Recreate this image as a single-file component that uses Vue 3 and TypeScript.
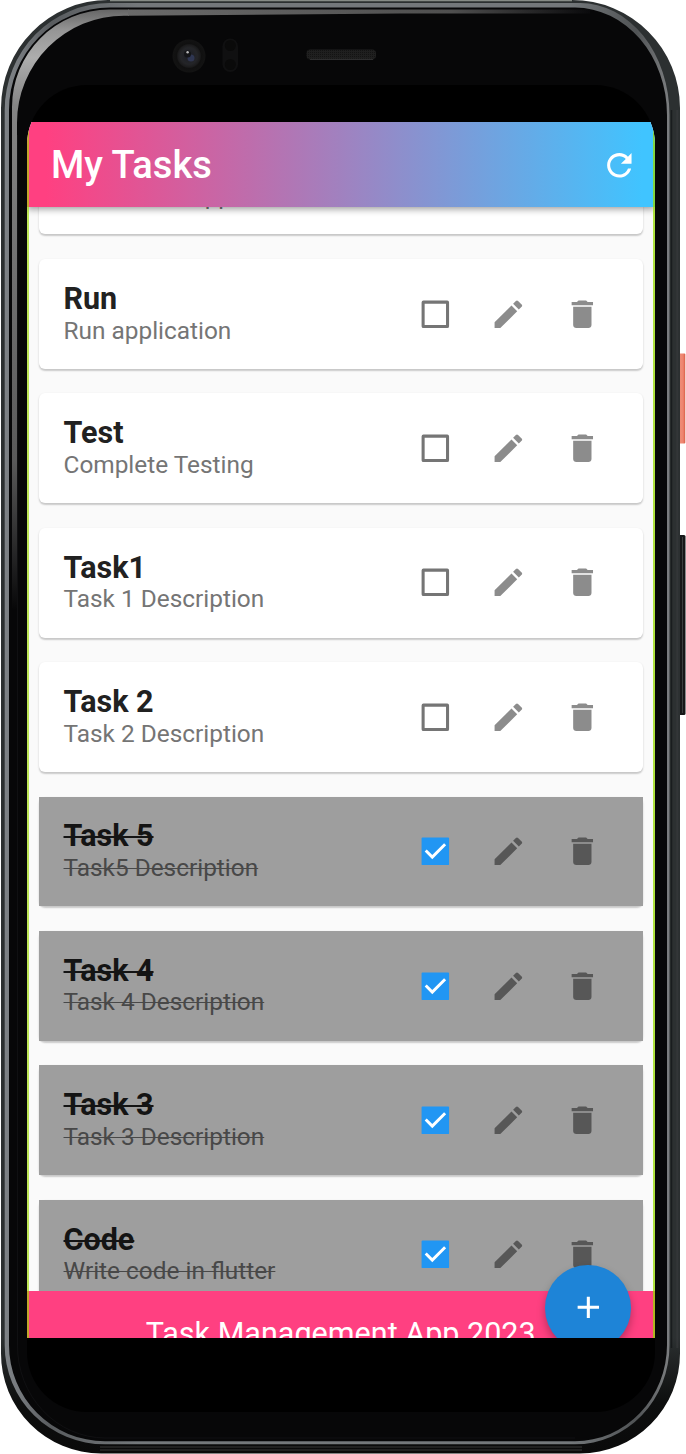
<script setup lang="ts">
interface Task {
  title: string
  description: string
  done: boolean
}

const tasks: Task[] = [
  { title: '', description: 'Create new app', done: false },
  { title: 'Run', description: 'Run application', done: false },
  { title: 'Test', description: 'Complete Testing', done: false },
  { title: 'Task1', description: 'Task 1 Description', done: false },
  { title: 'Task 2', description: 'Task 2 Description', done: false },
  { title: 'Task 5', description: 'Task5 Description', done: true },
  { title: 'Task 4', description: 'Task 4 Description', done: true },
  { title: 'Task 3', description: 'Task 3 Description', done: true },
  { title: 'Code', description: 'Write code in flutter', done: true },
]
</script>

<template>
  <div class="device">
    <svg class="shell" viewBox="0 0 686 1454" aria-hidden="true">
      <defs>
        <linearGradient id="body" x1="0" x2="0" y1="0" y2="1">
          <stop offset="0" stop-color="#2c3031" />
          <stop offset="0.92" stop-color="#2c3031" />
          <stop offset="0.965" stop-color="#0d0e0e" />
          <stop offset="1" stop-color="#0a0a0a" />
        </linearGradient>
        <linearGradient id="rimOuter" x1="0" x2="1" y1="0" y2="0">
          <stop offset="0" stop-color="#7e8286" />
          <stop offset="0.02" stop-color="#777b7f" />
          <stop offset="0.07" stop-color="#595c5f" />
          <stop offset="0.2" stop-color="#74787b" />
          <stop offset="0.85" stop-color="#74787b" />
          <stop offset="0.95" stop-color="#505355" />
          <stop offset="1" stop-color="#7c7e80" />
        </linearGradient>
        <linearGradient id="rimInner" x1="0" x2="0" y1="0" y2="1">
          <stop offset="0" stop-color="#666" />
          <stop offset="0.035" stop-color="#969696" />
          <stop offset="0.08" stop-color="#adadad" />
          <stop offset="0.16" stop-color="#858585" />
          <stop offset="0.4" stop-color="#737373" />
          <stop offset="0.75" stop-color="#5a5a5a" />
          <stop offset="1" stop-color="#070708" />
        </linearGradient>
        <linearGradient id="rimTop" x1="0" x2="1" y1="0" y2="0">
          <stop offset="0" stop-color="#6a6a6a" />
          <stop offset="0.7" stop-color="#4f4f4f" />
          <stop offset="1" stop-color="#0a0a0c" />
        </linearGradient>
        <radialGradient id="lens">
          <stop offset="0" stop-color="#1b1d25" />
          <stop offset="0.5" stop-color="#242528" />
          <stop offset="0.68" stop-color="#1b1b1c" />
          <stop offset="0.75" stop-color="#101010" />
          <stop offset="1" stop-color="#131313" />
        </radialGradient>
        <linearGradient id="power" x1="0" x2="1" y1="0" y2="0">
          <stop offset="0" stop-color="#c85543" />
          <stop offset="0.35" stop-color="#ef8b76" />
          <stop offset="0.7" stop-color="#ee846e" />
          <stop offset="1" stop-color="#d85c46" />
        </linearGradient>
        <pattern id="mesh" width="2" height="2" patternUnits="userSpaceOnUse">
          <rect width="2" height="2" fill="#1f1f1f" />
          <rect width="1" height="1" fill="#131313" />
        </pattern>
      </defs>

      <!-- side buttons -->
      <rect x="678" y="353.500" width="7.300" height="90" rx="1" fill="url(#power)" />
      <rect x="678" y="535" width="7.500" height="180" rx="1.500" fill="#161718" />
      <path d="M682.500 537v176" stroke="#3b3e3e" stroke-width="1" />

      <!-- metal rim -->
      <path d="M1 108A107 108 0 0 1 108 0H572A108 108 0 0 1 680 108V1353A100 100 0 0 1 580 1453.500H101A100 100 0 0 1 1 1353Z" fill="url(#body)" />
      <path d="M110 .6H572" stroke="#858a85" stroke-width="1.200" />
      <path d="M677.300 110V1348" stroke="#393b3d" stroke-width="2" opacity=".6" />
      <path d="M671.500 110V1348" stroke="#121416" stroke-width="1.500" opacity=".7" />
      <path d="M100 1450H582M100 1447H582" stroke="#444" stroke-width=".8" fill="none" />
      <path d="M4.700 110A105.300 107 0 0 1 110 3H580A89.500 112 0 0 1 669.500 115V1345A94.500 99 0 0 1 575 1444.300H105A100.300 99 0 0 1 4.700 1345Z" fill="url(#rimOuter)" />
      <path d="M9 110A101 102.400 0 0 1 110 7.600H575A92 107.400 0 0 1 667 115V1345A92 96.500 0 0 1 575 1441.200H105A96 96.200 0 0 1 9 1345Z" fill="#070708" />
      <path d="M12 610V107A97 97.400 0 0 1 109 9.600H129V15.700H124A107 107 0 0 0 17 122.700V610Z" fill="url(#rimInner)" />
      <path d="M128 9.600H590V13.500H400L128 15.700Z" fill="url(#rimTop)" />

      <!-- glass edge -->
      <path d="M17.500 135V1345A88 92 0 0 0 105 1438H575" fill="none" stroke="#101012" stroke-width="1" />

      <!-- camera, sensor and earpiece -->
      <circle cx="189" cy="56" r="16.500" fill="url(#lens)" />
      <circle cx="191" cy="58" r="3.500" fill="#343d60" opacity=".75" />
      <circle cx="187.500" cy="54" r="3.500" fill="#141518" />
      <circle cx="187.600" cy="52.300" r="1.200" fill="#b9b9b9" />
      <rect x="222.500" y="38.500" width="15.500" height="33.500" rx="7.700" fill="#101011" />
      <circle cx="230.300" cy="45.500" r="5.500" fill="#0a0a0a" />
      <circle cx="230.300" cy="64.500" r="5.500" fill="#0a0a0a" />
      <rect x="306.500" y="49.500" width="69.500" height="10" rx="4" fill="url(#mesh)" />
      <path d="M310 59.300H373" stroke="#363636" />
    </svg>

    <div class="screen">
      <main class="app">
        <header class="bar">
          <h1>My Tasks</h1>
          <svg class="icon" viewBox="0 0 24 24">
            <path d="M17.650 6.350C16.200 4.900 14.210 4 12 4c-4.420 0-7.990 3.580-7.990 8s3.570 8 7.990 8c3.730 0 6.840-2.550 7.730-6h-2.080c-.82 2.330-3.040 4-5.650 4-3.310 0-6-2.690-6-6s2.690-6 6-6c1.660 0 3.140.69 4.220 1.780L13 11h7V4l-2.350 2.350z" />
          </svg>
        </header>

        <section class="viewport">
          <ul class="list">
            <li v-for="task in tasks" :key="task.description" class="card">
              <div class="tile" :class="{ done: task.done }">
                <div class="copy">
                  <h2>{{ task.title }}</h2>
                  <p>{{ task.description }}</p>
                </div>
                <div class="actions">
                  <span class="cell">
                    <svg v-if="task.done" class="icon" viewBox="0 0 24 24">
                      <rect x="3" y="3" width="18" height="18" rx=".6" fill="#2196f3" />
                      <path d="M5.700 11.500L10 15.800L18.400 7.400" fill="none" stroke="#fff" stroke-width="1.900" />
                    </svg>
                    <svg v-else class="icon" viewBox="0 0 24 24">
                      <rect x="4" y="4" width="16" height="16" rx=".2" fill="none" stroke="#757575" stroke-width="2" />
                    </svg>
                  </span>
                  <span class="cell">
                    <svg class="icon" viewBox="0 0 24 24">
                      <path d="M3 17.250V21h3.750L17.810 9.940l-3.750-3.750L3 17.250zM20.710 7.040a.996.996 0 0 0 0-1.410l-2.340-2.340a.996.996 0 0 0-1.410 0l-1.830 1.830 3.750 3.750 1.830-1.830z" />
                    </svg>
                  </span>
                  <span class="cell">
                    <svg class="icon" viewBox="0 0 24 24">
                      <path d="M6 19c0 1.100.9 2 2 2h8c1.100 0 2-.9 2-2V7H6v12zM19 4h-3.500l-1-1h-5l-1 1H5v2h14V4z" />
                    </svg>
                  </span>
                </div>
              </div>
            </li>
          </ul>
        </section>

        <footer class="foot"><span>Task Management App 2023</span></footer>
        <button class="fab" aria-label="Add task">
          <svg class="icon" viewBox="0 0 24 24"><path d="M19 13h-6v6h-2v-6H5v-2h6V5h2v6h6v2z" /></svg>
        </button>
      </main>
    </div>
  </div>
</template>

<style>
body {
  margin: 0;
  background: #fff;
}
</style>

<style scoped>
.device {
  position: relative;
  width: 686px;
  height: 1454px;
  box-sizing: border-box;
  padding: 85px 0 0 27px;
  overflow: hidden;
  font-family: Roboto, sans-serif;
}
.shell {
  position: absolute;
  inset: 0;
  width: 686px;
  height: 1454px;
}
.screen {
  position: relative;
  width: 628.400px;
  height: 1327px;
  box-sizing: border-box;
  padding-top: 37px;
  border-radius: 60px;
  background: #000;
  overflow: hidden;
}
.app {
  position: relative;
  display: flex;
  flex-direction: column;
  height: 1216px;
  background: #fafafa;
  overflow: hidden;
}
.app::after {
  content: '';
  position: absolute;
  z-index: 2;
  inset: 0;
  border-left: 2px solid rgba(160, 220, 0, 0.65);
  border-right: 2px solid rgba(150, 220, 0, 0.75);
  pointer-events: none;
}
.bar {
  position: relative;
  z-index: 1;
  flex: none;
  display: flex;
  align-items: center;
  justify-content: space-between;
  box-sizing: border-box;
  height: 85.300px;
  padding: 1px 18px 0 24px;
  background: linear-gradient(90deg, #ff4081 3%, #40c4ff 98%);
  box-shadow: 0 2px 7px rgba(0, 0, 0, 0.4);
  color: #fff;
}
h1,
h2,
p {
  margin: 0;
}
h1 {
  font-size: 38.100px;
  font-weight: 500;
  line-height: 44px;
}
.icon {
  display: block;
  width: 36.660px;
  height: 36.660px;
  fill: currentColor;
}
.viewport {
  flex: 1;
  min-height: 0;
  overflow: hidden;
}
.list {
  display: flex;
  flex-direction: column;
  gap: 24.600px;
  margin: -82.700px 12.200px 0 12px;
  padding: 0;
  list-style: none;
}
.card {
  flex: none;
  height: 109.800px;
  border-radius: 6px;
  background: #fff;
  box-shadow: 0 1.500px 1.500px rgba(0, 0, 0, 0.16), 0 1px 3px rgba(0, 0, 0, 0.07);
}
.tile {
  display: flex;
  justify-content: space-between;
  box-sizing: border-box;
  height: 100%;
  padding: 0 24.500px;
  color: #8c8c8c;
}
.copy {
  padding-top: 21.800px;
}
h2 {
  min-height: 35.700px;
  color: #212121;
  font-size: 30.500px;
  font-weight: 700;
  line-height: 35.700px;
}
p {
  color: #757575;
  font-size: 24.400px;
  line-height: 28.600px;
}
.actions {
  display: flex;
  align-items: center;
}
.cell {
  display: flex;
  justify-content: center;
  width: 73.300px;
}
.done {
  background: #9e9e9e;
  color: #575757;
}
.done h2 {
  color: #141414;
  text-decoration: line-through;
  text-decoration-thickness: 1.700px;
}
.done p {
  color: #484848;
  text-decoration: line-through;
  text-decoration-thickness: 1.300px;
}
.foot {
  flex: none;
  display: flex;
  justify-content: center;
  box-sizing: border-box;
  height: 47px;
  padding: 25px 1px 0 0;
  background: #ff4081;
  color: #fff;
  font-size: 30.560px;
  line-height: 36px;
  white-space: nowrap;
}
.fab {
  position: absolute;
  left: 518.300px;
  top: 1143px;
  z-index: 1;
  display: flex;
  align-items: center;
  justify-content: center;
  width: 85.600px;
  height: 85.600px;
  padding: 0;
  border: 0;
  border-radius: 50%;
  background: #1e84d7;
  color: #fff;
  box-shadow: 0 5px 9px rgba(0, 0, 0, 0.28);
}
</style>
